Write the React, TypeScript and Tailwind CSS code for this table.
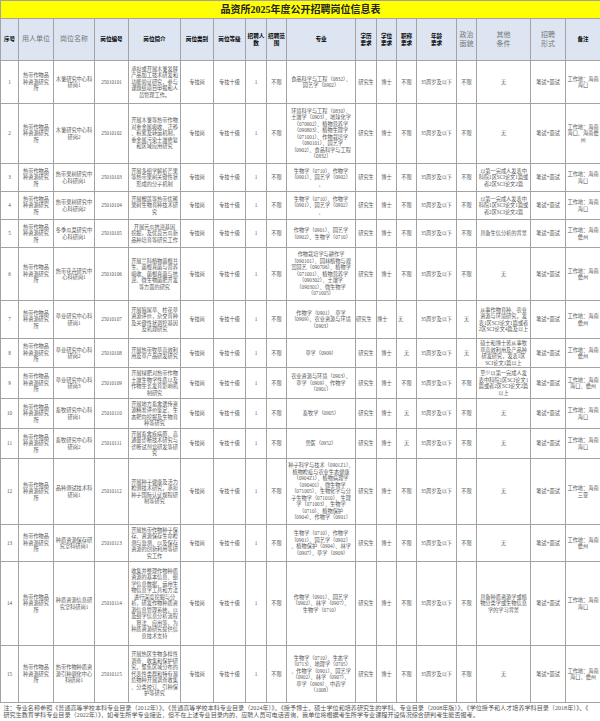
import React from 'react';

interface Row {
  no: string;
  name: string;
  code: string;
  intro: string;
  major: string;
  zc: string;
  zz: string;
  other: string;
  note: string;
  h: string;
  shift?: boolean;
}

const serif = "font-['Liberation_Serif','Noto_Sans_CJK_SC',serif]";
const cell = 'border border-[#a3a3a3] p-0 text-center align-middle whitespace-pre';

const unit = '热带作物品\n种资源研究\n所';

const rows: Row[] = [
  {
    no: '1',
    name: '木薯研究中心科\n研岗1',
    code: '25010101',
    intro: '承担或开展木薯发酵\n产品加工技术研发和\n功能验证研究，参与\n课题组项目申报和人\n员管理工作。',
    major: '食品科学与工程（0832）、\n园艺学（0902）',
    zc: '不限',
    zz: '不限',
    other: '无',
    note: '工作地：海南\n海口',
    h: 'h-[43px]',
  },
  {
    no: '2',
    name: '木薯研究中心科\n研岗2',
    code: '25010102',
    intro: '开展木薯等热带作物\n对重金属吸收、迁移\n、积累及转运机制，\n重金属污染土壤修复\n和区域应用研究',
    major:
      '环境科学与工程（0830）、\n土壤学（0903）、地球化学\n（070902）、植物营养学\n（090803）、植物生理学\n（071001）、作物栽培学\n（090101）、园艺学\n（0902）、食品科学与工程\n（0832）',
    zc: '不限',
    zz: '不限',
    other: '无',
    note: '工作地：海南\n海口、海南儋\n州',
    h: 'h-[60px]',
  },
  {
    no: '3',
    name: '热带果树研究中\n心科研岗1',
    code: '25010103',
    intro: '开展多组学解析芒果\n等热带果树关键性状\n形成的分子机制',
    major: '生物学（0710）、作物学\n（0901）、园艺学（0902）\n、',
    zc: '不限',
    zz: '不限',
    other: '以第一完成人发表中\n科院1区SCI论文1篇或\n者2区SCI论文2篇',
    note: '工作地：海南\n海口',
    h: 'h-[28px]',
  },
  {
    no: '4',
    name: '热带果树研究中\n心科研岗2',
    code: '25010104',
    intro: '开展榴莲等热带优稀\n果树生物育种技术研\n究',
    major: '生物学（0710）、作物学\n（0901）、园艺学（0902）\n、',
    zc: '不限',
    zz: '不限',
    other: '以第一完成人发表中\n科院1区SCI论文1篇或\n者2区SCI论文2篇',
    note: '工作地：海南\n海口',
    h: 'h-[28px]',
  },
  {
    no: '5',
    name: '冬季瓜菜研究中\n心科研岗1',
    code: '25010105',
    intro: '开展苦瓜抗逆基因\n挖掘，及优良苦瓜新\n品种培育等研究工作',
    major: '作物学（0901）、园艺学\n（0902）、生物学（0710）',
    zc: '不限',
    zz: '不限',
    other: '具备生信分析的背景',
    note: '工作地：海南\n儋州',
    h: 'h-[28px]',
  },
  {
    no: '6',
    name: '热带花卉研究中\n心科研岗1',
    code: '25010106',
    intro: '开展兰科植物菌根共\n生、菌根真菌与营养\n吸收、菌根真菌与抗\n逆、微生物菌肥开发\n等方面的研究',
    major:
      '作物栽培学与耕作学\n（090101）、园林植物与观\n赏园艺（090706）、植物学\n（071001）、植物营养学\n（090302）、土壤学\n（090301）、微生物学\n（071005）',
    zc: '不限',
    zz: '不限',
    other: '无',
    note: '工作地：海南\n儋州',
    h: 'h-[53px]',
  },
  {
    no: '7',
    name: '草业研究中心科\n研岗1',
    code: '25010107',
    intro: '开展狼尾草、柱花草\n资源评价，杂交育种\n及关键性状调控基因\n及机理研究',
    major: '作物学（0901）、草学\n（0909）、农业资源与环境\n（0903）',
    zc: '无',
    zz: '无',
    other: '从事作物育种、农业\n资源与环境研究，发\n表1区SCI论文1篇或者\n2区SCI论文4篇及以上',
    note: '工作地：海南\n儋州',
    h: 'h-[38px]',
    shift: true,
  },
  {
    no: '8',
    name: '草业研究中心科\n研岗2',
    code: '25010108',
    intro: '开展热带牧草高效利\n用及草产品研发研究',
    major: '草学（0909）',
    zc: '无',
    zz: '无',
    other: '硕士和博士皆从事牧\n草高效利用及产品种\n研发研究，发表1区\nSCI论文1篇以上',
    note: '工作地：海南\n儋州',
    h: 'h-[29px]',
  },
  {
    no: '9',
    name: '草业研究中心科\n研岗3',
    code: '25010109',
    intro: '开展绿肥对热带作物\n土壤生物学性质以及\n作物生长发育影响机\n制研究',
    major: '农业资源与环境（0903）、\n草学（0909）、作物学\n（0901）',
    zc: '不限',
    zz: '不限',
    other: '至少以第一完成人发\n表中科院1区SCI论文1\n篇或者2区SCI论文2篇\n以上',
    note: '工作地：海南\n海口、儋州',
    h: 'h-[31px]',
  },
  {
    no: '10',
    name: '畜牧研究中心科\n研岗1',
    code: '25010110',
    intro: '开展地方畜禽遗传资\n源精准评价鉴定、生\n态靶向挖掘及生物育\n种等研究',
    major: '畜牧学（0905）',
    zc: '无',
    zz: '不限',
    other: '无',
    note: '工作地：海南\n海口',
    h: 'h-[30px]',
  },
  {
    no: '11',
    name: '畜牧研究中心科\n研岗2',
    code: '25010111',
    intro: '开展畜禽疾病原、高\n通量诊断技术研究与\n诊断试剂盒研发等研\n究',
    major: '兽医（0952）',
    zc: '无',
    zz: '不限',
    other: '无',
    note: '工作地：海南\n海口',
    h: 'h-[30px]',
  },
  {
    no: '12',
    name: '品种测试技术科\n研岗1',
    code: '25010112',
    intro: '开展种子健康及活力\n检测技术研究，承担\n种子国际认证规程研\n制等研究',
    major:
      '种子科学与技术（0901Z1）、\n植物检疫与农业生态健康\n（0904Z1）、植物病理学\n（090401）、微生物学\n（071005）、生物化学与分\n子生物学（071010）、生理\n学（071003）、生物学\n（0710）、植物保护\n（0904）、作物学（0901）',
    zc: '不限',
    zz: '不限',
    other: '无',
    note: '工作地：海南\n三亚',
    h: 'h-[66px]',
  },
  {
    no: '13',
    name: '种质资源保存研\n究室科研岗1',
    code: '25010113',
    intro: '开展热带作物种子保\n存、资源保存生命检\n测与监测、以及保存\n资源的创新利用等研\n究工作',
    major: '生物学（0710）、作物学\n（0901）、园艺学（0902）\n、植物保护（0904）、林学\n（0907）、草学（0909）',
    zc: '不限',
    zz: '不限',
    other: '无',
    note: '工作地：海南\n儋州',
    h: 'h-[37px]',
  },
  {
    no: '14',
    name: '种质资源信息研\n究室科研岗1',
    code: '25010114',
    intro:
      '收集并整理作物种质\n资源的基本信息、组\n学信息数据，运用生\n物信息学工具和方法\n进行深度挖掘与分\n析，研发作物种质资\n源信息管理系统，以\n及组学信息分析流程\n、算法、应用等，为\n种质资源研究提供信\n息技术支持',
    major: '作物学（0901）、园艺学\n（0902）、林学（0907）、\n生物学（0710）',
    zc: '不限',
    zz: '不限',
    other: '具备种质资源学或植\n物分类学或生物信息\n学的学习背景',
    note: '工作地：海南\n海口',
    h: 'h-[84px]',
  },
  {
    no: '15',
    name: '热带作物种质资\n源引种驯化中心\n科研岗1',
    code: '25010115',
    intro:
      '开展热区生物多样性\n调查、收集和保护研\n究，聚焦区域分布的\n代表性类群和特有濒\n危物种开展调查收集\n、分类校订、引种保\n护等研究',
    major:
      '生物学（0710）、生态学\n（0713）、地理学（0705）\n、作物学（0901）、园艺学\n（0902）、林学（0907）、\n草学（0909）、中药学\n（1008）',
    zc: '不限',
    zz: '不限',
    other: '无',
    note: '工作地：海南\n海口、儋州',
    h: 'h-[57px]',
  },
];

function HeadBold({ text }: { text: string }) {
  return (
    <th className={`${cell} font-bold text-[5.6px] leading-[7px] text-black font-['Noto_Sans_CJK_SC',sans-serif]`}>
      {text}
    </th>
  );
}

function HeadSerif({ text }: { text: string }) {
  return (
    <th className={`${cell} ${serif} font-normal text-[7px] leading-[8.5px] text-[#777]`}>{text}</th>
  );
}

export default function App() {
  return (
    <div className="w-[600px] h-[721px] bg-white overflow-hidden">
      <table className={`table-fixed border-collapse w-[600px] ${serif} text-[5.2px] leading-[6.5px] text-[#555]`}>
        <colgroup>
          <col className="w-[18px]" />
          <col className="w-[35px]" />
          <col className="w-[41px]" />
          <col className="w-[34px]" />
          <col className="w-[52px]" />
          <col className="w-[33px]" />
          <col className="w-[32px]" />
          <col className="w-[21px]" />
          <col className="w-[20px]" />
          <col className="w-[69px]" />
          <col className="w-[21px]" />
          <col className="w-[20px]" />
          <col className="w-[20px]" />
          <col className="w-[40px]" />
          <col className="w-[20px]" />
          <col className="w-[54px]" />
          <col className="w-[35px]" />
          <col className="w-[35px]" />
        </colgroup>
        <thead>
          <tr className="h-[18px]">
            <th
              colSpan={18}
              className="border border-[#a3a3a3] bg-[#ffff00] p-0 text-center align-middle text-[10px] leading-[12px] font-bold text-[#222]"
            >
              品资所2025年度公开招聘岗位信息表
            </th>
          </tr>
          <tr className="h-[42px] bg-[#dce5f1]">
            <HeadBold text="序号" />
            <HeadSerif text="用人单位" />
            <HeadSerif text="岗位名称" />
            <HeadBold text="岗位编号" />
            <HeadBold text="岗位简介" />
            <HeadBold text="岗位类别" />
            <HeadBold text="岗位等级" />
            <HeadBold text={'招聘人\n数'} />
            <HeadBold text={'招聘范\n围'} />
            <HeadBold text="专业" />
            <HeadBold text={'学历\n要求'} />
            <HeadBold text={'学位\n要求'} />
            <HeadBold text={'职称\n要求'} />
            <HeadBold text={'年龄\n要求'} />
            <HeadSerif text={'政治\n面貌'} />
            <HeadSerif text={'其他\n条件'} />
            <HeadSerif text={'招聘\n形式'} />
            <HeadBold text="备注" />
          </tr>
        </thead>
        <tbody>
          {rows.map((r) => (
            <tr key={r.no} className={r.h}>
              <td className={cell}>{r.no}</td>
              <td className={cell}>{unit}</td>
              <td className={cell}>{r.name}</td>
              <td className={cell}>{r.code}</td>
              <td className={cell}>{r.intro}</td>
              <td className={cell}>专技岗</td>
              <td className={cell}>专技十级</td>
              <td className={cell}>1</td>
              <td className={cell}>不限</td>
              <td className={cell}>{r.major}</td>
              <td className={r.shift ? `${cell} text-left` : cell}>研究生</td>
              <td className={r.shift ? `${cell} text-left` : cell}>博士</td>
              <td className={r.shift ? `${cell} text-left pl-[1px]` : cell}>{r.zc}</td>
              <td className={cell}>35周岁及以下</td>
              <td className={cell}>{r.zz}</td>
              <td className={cell}>{r.other}</td>
              <td className={cell}>笔试+面试</td>
              <td className={cell}>{r.note}</td>
            </tr>
          ))}
          <tr className="h-[19px]">
            <td
              colSpan={18}
              className="p-0 pl-[3px] text-left align-middle whitespace-pre text-[6.1px] leading-[7px] text-[#555]"
            >
              {'注：专业名称参照《普通高等学校本科专业目录（2012年）》、《普通高等学校本科专业目录（2024年）》、《授予博士、硕士学位和培养研究生的学科、专业目录（2008年版）》、《学位授予和人才培养学科目录（2018年）》、《\n研究生教育学科专业目录（2022年）》，如考生所学专业接近，但不在上述专业目录内的，应聘人员可电话咨询，我单位将根据考生所学专业课程开设情况综合研判考生能否报考。'}
            </td>
          </tr>
        </tbody>
      </table>
    </div>
  );
}
